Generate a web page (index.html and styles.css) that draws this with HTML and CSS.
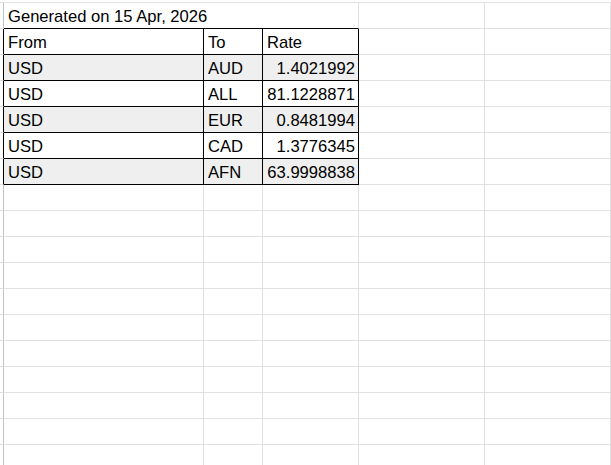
FILE: index.html
```html
<!DOCTYPE html>
<html>
<head>
<meta charset="utf-8">
<link rel="stylesheet" href="styles.css">
</head>
<body>
<div class="wrap">
  <div class="sheet">
    <div class="rh"></div><div class="c title">Generated on 15 Apr, 2026</div><div class="c"></div><div class="c"></div><div class="c"></div>

    <div class="rh t"></div><div class="c t">From</div><div class="c t">To</div><div class="c t">Rate</div><div class="c"></div><div class="c"></div><div class="c"></div>
    <div class="rh t"></div><div class="c t s">USD</div><div class="c t s">AUD</div><div class="c t s num">1.4021992</div><div class="c"></div><div class="c"></div><div class="c"></div>
    <div class="rh t"></div><div class="c t">USD</div><div class="c t">ALL</div><div class="c t num">81.1228871</div><div class="c"></div><div class="c"></div><div class="c"></div>
    <div class="rh t"></div><div class="c t s">USD</div><div class="c t s">EUR</div><div class="c t s num">0.8481994</div><div class="c"></div><div class="c"></div><div class="c"></div>
    <div class="rh t"></div><div class="c t">USD</div><div class="c t">CAD</div><div class="c t num">1.3776345</div><div class="c"></div><div class="c"></div><div class="c"></div>
    <div class="rh t"></div><div class="c t s">USD</div><div class="c t s">AFN</div><div class="c t s num">63.9998838</div><div class="c"></div><div class="c"></div><div class="c"></div>

    <div class="rh"></div><div class="c"></div><div class="c"></div><div class="c"></div><div class="c"></div><div class="c"></div><div class="c"></div>
    <div class="rh"></div><div class="c"></div><div class="c"></div><div class="c"></div><div class="c"></div><div class="c"></div><div class="c"></div>
    <div class="rh"></div><div class="c"></div><div class="c"></div><div class="c"></div><div class="c"></div><div class="c"></div><div class="c"></div>
    <div class="rh"></div><div class="c"></div><div class="c"></div><div class="c"></div><div class="c"></div><div class="c"></div><div class="c"></div>
    <div class="rh"></div><div class="c"></div><div class="c"></div><div class="c"></div><div class="c"></div><div class="c"></div><div class="c"></div>
    <div class="rh"></div><div class="c"></div><div class="c"></div><div class="c"></div><div class="c"></div><div class="c"></div><div class="c"></div>
    <div class="rh"></div><div class="c"></div><div class="c"></div><div class="c"></div><div class="c"></div><div class="c"></div><div class="c"></div>
    <div class="rh"></div><div class="c"></div><div class="c"></div><div class="c"></div><div class="c"></div><div class="c"></div><div class="c"></div>
    <div class="rh"></div><div class="c"></div><div class="c"></div><div class="c"></div><div class="c"></div><div class="c"></div><div class="c"></div>
    <div class="rh"></div><div class="c"></div><div class="c"></div><div class="c"></div><div class="c"></div><div class="c"></div><div class="c"></div>
    <div class="rh"></div><div class="c"></div><div class="c"></div><div class="c"></div><div class="c"></div><div class="c"></div><div class="c"></div>
  </div>
</div>
</body>
</html>
```

FILE: styles.css
```css
html, body {
  margin: 0;
  padding: 0;
  background: #ffffff;
  overflow: hidden;
}

.wrap {
  padding-top: 2px;
  width: 611px;
  height: 463px;
  overflow: hidden;
}

.sheet {
  display: grid;
  grid-template-columns: 4px 200px 59px 96px 126px 126px 1fr;
  grid-auto-rows: 26px;
  width: 700px;
  border-top: 1px solid #e1e1e1;
  font-family: "Liberation Sans", Arial, sans-serif;
  font-size: 16.6px;
  color: #000000;
}

.rh,
.c {
  box-sizing: border-box;
  border-bottom: 1px solid #e1e1e1;
  display: flex;
  align-items: flex-end;
  line-height: 19px;
  padding: 0 4px 2px 4px;
  white-space: nowrap;
}

.c {
  border-right: 1px solid #e1e1e1;
}

.rh {
  padding: 0;
  border-right: 1px solid #c4c4c4;
}

.title {
  grid-column: span 3;
  border-bottom-color: #000000;
  border-right-color: #e1e1e1;
  padding-left: 4px;
}

.rh.t {
  border-right-color: #000000;
}

.c.t {
  border-right-color: #000000;
  border-bottom-color: #000000;
}

.s {
  background: #efefef;
}

.num {
  justify-content: flex-end;
  padding-right: 3px;
}
```
